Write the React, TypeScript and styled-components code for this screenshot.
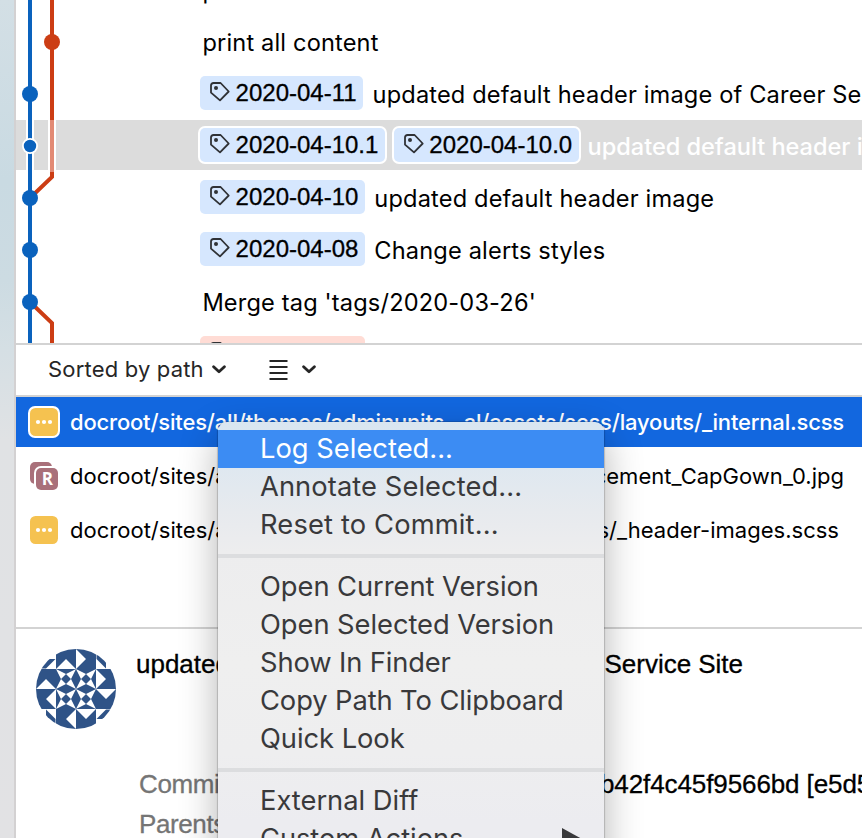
import React from "react";
import styled, { createGlobalStyle, css } from "styled-components";

const GlobalStyle = createGlobalStyle`
  * { box-sizing: border-box; }
  html, body { margin: 0; padding: 0; overflow: hidden; }
  body { font-family: "Inter", sans-serif; color: #000; }
  svg { display: block; flex: none; }
`;

const Screen = styled.div`
  position: relative;
  display: flex;
  width: 862px;
  height: 838px;
  overflow: hidden;
  background: #fff;
`;

const DesktopEdge = styled.div`
  flex: none;
  width: 16px;
  border-right: 2px solid #d3d1d2;
  background: linear-gradient(
    to bottom,
    #d3dfe5 0,
    #c9dae2 180px,
    #ccdbe2 280px,
    #d5dfe4 350px,
    #e0e2e4 440px,
    #e2e2e4 838px
  );
`;

const Window = styled.main`
  flex: 1;
  min-width: 0;
  display: flex;
  flex-direction: column;
`;

/* ---------- commit history ---------- */

const History = styled.section`
  position: relative;
  flex: none;
  height: 345px;
  overflow: hidden;
  border-bottom: 2px solid #d3d3d3;
`;

const HistoryRows = styled.div`
  margin-top: -36px;
`;

const CommitRow = styled.div<{ $selected?: boolean }>`
  display: flex;
  align-items: center;
  gap: 9px;
  height: 52px;
  padding-left: 184px;
  white-space: nowrap;
  ${(p) =>
    p.$selected &&
    css`
      background: linear-gradient(#dcdcdc, #dcdcdc) top / 100% 50px no-repeat;
      color: #fff;
    `}
`;

const TagBadge = styled.span<{ $tone?: "blue" | "red"; $ring?: boolean }>`
  flex: none;
  display: flex;
  align-items: center;
  height: 34px;
  margin-top: -2px;
  padding: 0 6.4px 0 10px;
  gap: 5.6px;
  border-radius: 5px;
  background: ${(p) => (p.$tone === "red" ? "#ffdcd5" : "#d6e7fe")};
  box-shadow: ${(p) => (p.$ring ? "0 0 0 2px #fff" : "none")};
  color: #000;
  font: 24px/34px "Liberation Sans", Arial, sans-serif;
  -webkit-text-stroke: 0.3px currentColor;

  svg {
    margin-top: -2px;
  }
`;

const Message = styled.span<{ $plain?: boolean; $bold?: boolean }>`
  font-size: 23.6px;
  line-height: 30px;
  letter-spacing: ${(p) => (p.$bold ? "-0.04px" : "0.16px")};
  margin: 2px 0 0 ${(p) => (p.$plain ? "2.4px" : p.$bold ? "0" : "0.6px")};
  font-weight: ${(p) => (p.$bold ? 500 : 400)};
`;

const GraphOverlay = styled.svg`
  position: absolute;
  left: 0;
  top: 0;
`;

const TagIcon = () => (
  <svg width="20" height="20" viewBox="0 0 20 20" fill="none">
    <path
      d="M3.6 1H10.6L18.7 9.5L10 18.4L1 10.6V3.6Q1 1 3.6 1Z"
      stroke="#303236"
      strokeWidth="1.8"
      strokeLinejoin="round"
    />
    <circle cx="6" cy="5.9" r="2" fill="#303236" />
  </svg>
);

type Commit = {
  tags?: string[];
  tone?: "blue" | "red";
  message?: string;
  selected?: boolean;
};

const commits: Commit[] = [
  { message: "print all content" },
  { message: "print all content" },
  { tags: ["2020-04-11"], message: "updated default header image of Career Service Site" },
  { tags: ["2020-04-10.1", "2020-04-10.0"], message: "updated default header image of Career", selected: true },
  { tags: ["2020-04-10"], message: "updated default header image" },
  { tags: ["2020-04-08"], message: "Change alerts styles" },
  { message: "Merge tag 'tags/2020-03-26'" },
  { tags: ["2020-03-26"], tone: "red" },
];

const BLUE = "#0a62bd";
const RED = "#cc3d14";

const CommitGraph = () => (
  <GraphOverlay width="60" height="343" viewBox="0 0 60 343" fill="none">
    <path d="M14 120V170M36 120V170" stroke="#fff" strokeWidth="8" />
    <path d="M36 0V120M36 172V177L14 198M14 302L36 323V343" stroke={RED} strokeWidth="4" />
    <path d="M36 120V172" stroke="#e28a74" strokeWidth="4" />
    <path d="M14 0V343" stroke={BLUE} strokeWidth="4" />
    <circle cx="36" cy="42" r="8" fill={RED} />
    {[94, 198, 250, 302].map((y) => (
      <circle key={y} cx="14" cy={y} r="8" fill={BLUE} />
    ))}
    <circle cx="14" cy="146" r="7.1" fill={BLUE} stroke="#fff" strokeWidth="1.8" />
  </GraphOverlay>
);

/* ---------- sort toolbar ---------- */

const Toolbar = styled.div`
  flex: none;
  display: flex;
  align-items: center;
  height: 52px;
  padding: 0 0 2px 32px;
  border-bottom: 2px solid #d3d3d3;
  color: #262626;
  font-size: 22px;
  letter-spacing: 0.18px;
`;

const SortLabel = styled.span`
  width: 164px;
  white-space: nowrap;
`;

const ListGlyph = styled.svg`
  margin: 2px 14px 0 43px;
`;

const Chevron = () => (
  <svg width="14" height="9" viewBox="0 0 14 9" fill="none">
    <path d="M1.6 1.7L7 6.8L12.4 1.7" stroke="#262626" strokeWidth="2.8" strokeLinecap="round" strokeLinejoin="round" />
  </svg>
);

/* ---------- changed files ---------- */

const FileList = styled.section`
  flex: none;
  display: flex;
  flex-direction: column;
  gap: 4px;
  height: 232px;
  border-bottom: 2px solid #d3d3d3;
`;

const FileRow = styled.div<{ $selected?: boolean }>`
  flex: none;
  display: flex;
  align-items: center;
  height: 50px;
  padding-left: 12px;
  gap: 10px;
  font-size: 22px;
  letter-spacing: ${(p) => (p.$selected ? "-0.19px" : "0.02px")};
  background: ${(p) => (p.$selected ? "#1267df" : "transparent")};
  color: ${(p) => (p.$selected ? "#fff" : "#000")};
  font-weight: ${(p) => (p.$selected ? 500 : 400)};
`;

const FilePath = styled.span<{ $width: number }>`
  display: flex;
  justify-content: space-between;
  width: ${(p) => p.$width}px;
  white-space: nowrap;
`;

const ModifiedIcon = ({ selected }: { selected?: boolean }) => (
  <svg width="32" height="32" viewBox="0 0 32 32">
    {selected && <rect width="32" height="32" rx="7" fill="#fff" />}
    <rect x="2" y="2" width="28" height="28" rx="5.5" fill="#f5c250" />
    {[10, 16, 22].map((x) => (
      <circle key={x} cx={x} cy="16" r="2.1" fill="#fff" />
    ))}
  </svg>
);

const GlyphR = styled.text`
  font: 700 17px "Open Sans", sans-serif;
  letter-spacing: 0;
`;

const RenamedIcon = () => (
  <svg width="32" height="32" viewBox="0 0 32 32">
    <rect x="2" y="2" width="22" height="22" rx="5" fill="#a9707a" />
    <rect x="6" y="6" width="26" height="26" rx="7" fill="#fff" />
    <rect x="8" y="8" width="22" height="22" rx="5" fill="#a9707a" />
    <GlyphR x="19.3" y="25.2" textAnchor="middle" fill="#fff">R</GlyphR>
  </svg>
);

/* ---------- commit details ---------- */

const Details = styled.section`
  flex: 1;
  display: flex;
  padding: 20px 0 0 20px;
  font: 26px/30px "Liberation Sans", Arial, sans-serif;
  white-space: nowrap;
`;

const DetailBody = styled.div`
  flex: 1;
  padding-left: 20px;
`;

const DetailTitle = styled.div`
  display: flex;
  justify-content: space-between;
  width: 607px;
  letter-spacing: -0.02px;
  -webkit-text-stroke: 0.3px currentColor;
`;

const FieldGrid = styled.dl`
  display: grid;
  grid-template-columns: 461px auto;
  grid-auto-rows: 40px;
  margin: 90px 0 0 3px;
`;

const FieldName = styled.dt`
  color: #757575;
  letter-spacing: -0.4px;
  -webkit-text-stroke: 0.3px currentColor;
`;

const FieldValue = styled.dd`
  margin: 0;
  letter-spacing: -0.1px;
  -webkit-text-stroke: 0.3px currentColor;
`;

const Avatar = () => (
  <svg width="80" height="80" viewBox="-40 -40 80 80">
    <defs>
      <clipPath id="avatar-circle">
        <circle r="40" />
      </clipPath>
    </defs>
    <g clipPath="url(#avatar-circle)">
      {[0, 90, 180, 270].map((a) => (
        <g key={a} transform={`rotate(${a})`}>
          <path d="M-20 -40H20V-20H-20Z" fill="#2f5387" />
          <path d="M-20 -20H0V0H-20Z" fill="#2f5387" />
          <path d="M-20 -20L-10 -30L0 -20ZM0 -40L10 -30L0 -20Z" fill="#fff" />
          <path
            d="M-20 -20L-10 -15L-15 -10ZM0 -20L-5 -10L-10 -15ZM0 0L-10 -5L-5 -10ZM-20 0L-15 -10L-10 -5Z"
            fill="#fff"
          />
          <path d="M-30 -30H-20.5L-30 -20.5H-40Z" fill="#2f5387" />
        </g>
      ))}
    </g>
  </svg>
);

/* ---------- context menu ---------- */

const Menu = styled.nav`
  position: absolute;
  left: 218px;
  top: 422px;
  width: 386px;
  height: 460px;
  padding-top: 8px;
  border-radius: 9px;
  background: linear-gradient(to bottom, #d9e6f1 0, #dfe8f0 46px, #e7eaee 90px, #ededee 130px, #efefef 240px, #eeeeef 330px, #ececf0 400px);
  box-shadow: 0 0 1px 1px rgba(0, 0, 0, 0.18), 0 14px 38px rgba(0, 0, 0, 0.3);
  overflow: hidden;
`;

const MenuItem = styled.div<{ $active?: boolean; $track?: number }>`
  display: flex;
  align-items: center;
  justify-content: space-between;
  height: 38px;
  padding: 0 22px 0 42px;
  font-size: 27.3px;
  line-height: 36px;
  letter-spacing: ${(p) => p.$track ?? -0.04}px;
  white-space: nowrap;
  color: ${(p) => (p.$active ? "#fff" : "#39393b")};
  background: ${(p) => (p.$active ? "#3c8cf3" : "transparent")};
`;

const Separator = styled.div`
  height: 4px;
  margin: 10px 0;
  background: #dcdddf;
`;

type Entry = { label: string; active?: boolean; submenu?: boolean; track?: number };

const menuGroups: Entry[][] = [
  [
    { label: "Log Selected...", active: true, track: 0.02 },
    { label: "Annotate Selected...", track: 0.08 },
    { label: "Reset to Commit...", track: 0.15 },
  ],
  [
    { label: "Open Current Version" },
    { label: "Open Selected Version" },
    { label: "Show In Finder", track: -0.12 },
    { label: "Copy Path To Clipboard", track: -0.09 },
    { label: "Quick Look" },
  ],
  [{ label: "External Diff", track: 0 }, { label: "Custom Actions", submenu: true }],
];

const ContextMenu = () => (
  <Menu>
    {menuGroups.map((group, i) => (
      <React.Fragment key={i}>
        {i > 0 && <Separator />}
        {group.map((item) => (
          <MenuItem key={item.label} $active={item.active} $track={item.track}>
            {item.label}
            {item.submenu && (
              <svg width="20" height="22" viewBox="0 0 20 22">
                <path d="M0 0L20 11L0 22Z" fill="#39393b" />
              </svg>
            )}
          </MenuItem>
        ))}
      </React.Fragment>
    ))}
  </Menu>
);

export default function App() {
  return (
    <Screen>
      <GlobalStyle />
      <DesktopEdge />
      <Window>
        <History>
          <HistoryRows>
            {commits.map((c, i) => (
              <CommitRow key={i} $selected={c.selected}>
                {c.tags?.map((t) => (
                  <TagBadge key={t} $tone={c.tone} $ring={c.selected}>
                    <TagIcon />
                    {t}
                  </TagBadge>
                ))}
                <Message $plain={!c.tags} $bold={c.selected}>{c.message}</Message>
              </CommitRow>
            ))}
          </HistoryRows>
          <CommitGraph />
        </History>

        <Toolbar>
          <SortLabel>Sorted by path</SortLabel>
          <Chevron />
          <ListGlyph width="19" height="20" viewBox="0 0 19 20">
            <path d="M0.5 1H18.5M0.5 7H18.5M0.5 13H18.5M0.5 19H18.5" stroke="#262626" strokeWidth="2" />
          </ListGlyph>
          <Chevron />
        </Toolbar>

        <FileList>
          <FileRow $selected>
            <ModifiedIcon selected />
            <FilePath $width={774}>
              <span>docroot/sites/all/themes/adminunits_</span>
              <span>al/assets/scss/layouts/_internal.scss</span>
            </FilePath>
          </FileRow>
          <FileRow>
            <RenamedIcon />
            <FilePath $width={774}>
              <span>docroot/sites/all</span>
              <span>cement_CapGown_0.jpg</span>
            </FilePath>
          </FileRow>
          <FileRow>
            <ModifiedIcon />
            <FilePath $width={769}>
              <span>docroot/sites/all</span>
              <span>s/_header-images.scss</span>
            </FilePath>
          </FileRow>
        </FileList>

        <Details>
          <Avatar />
          <DetailBody>
            <DetailTitle>
              <span>updated</span>
              <span>Service Site</span>
            </DetailTitle>
            <FieldGrid>
              <FieldName>Commit</FieldName>
              <FieldValue>b42f4c45f9566bd [e5d5</FieldValue>
              <FieldName>Parents</FieldName>
            </FieldGrid>
          </DetailBody>
        </Details>
      </Window>
      <ContextMenu />
    </Screen>
  );
}
